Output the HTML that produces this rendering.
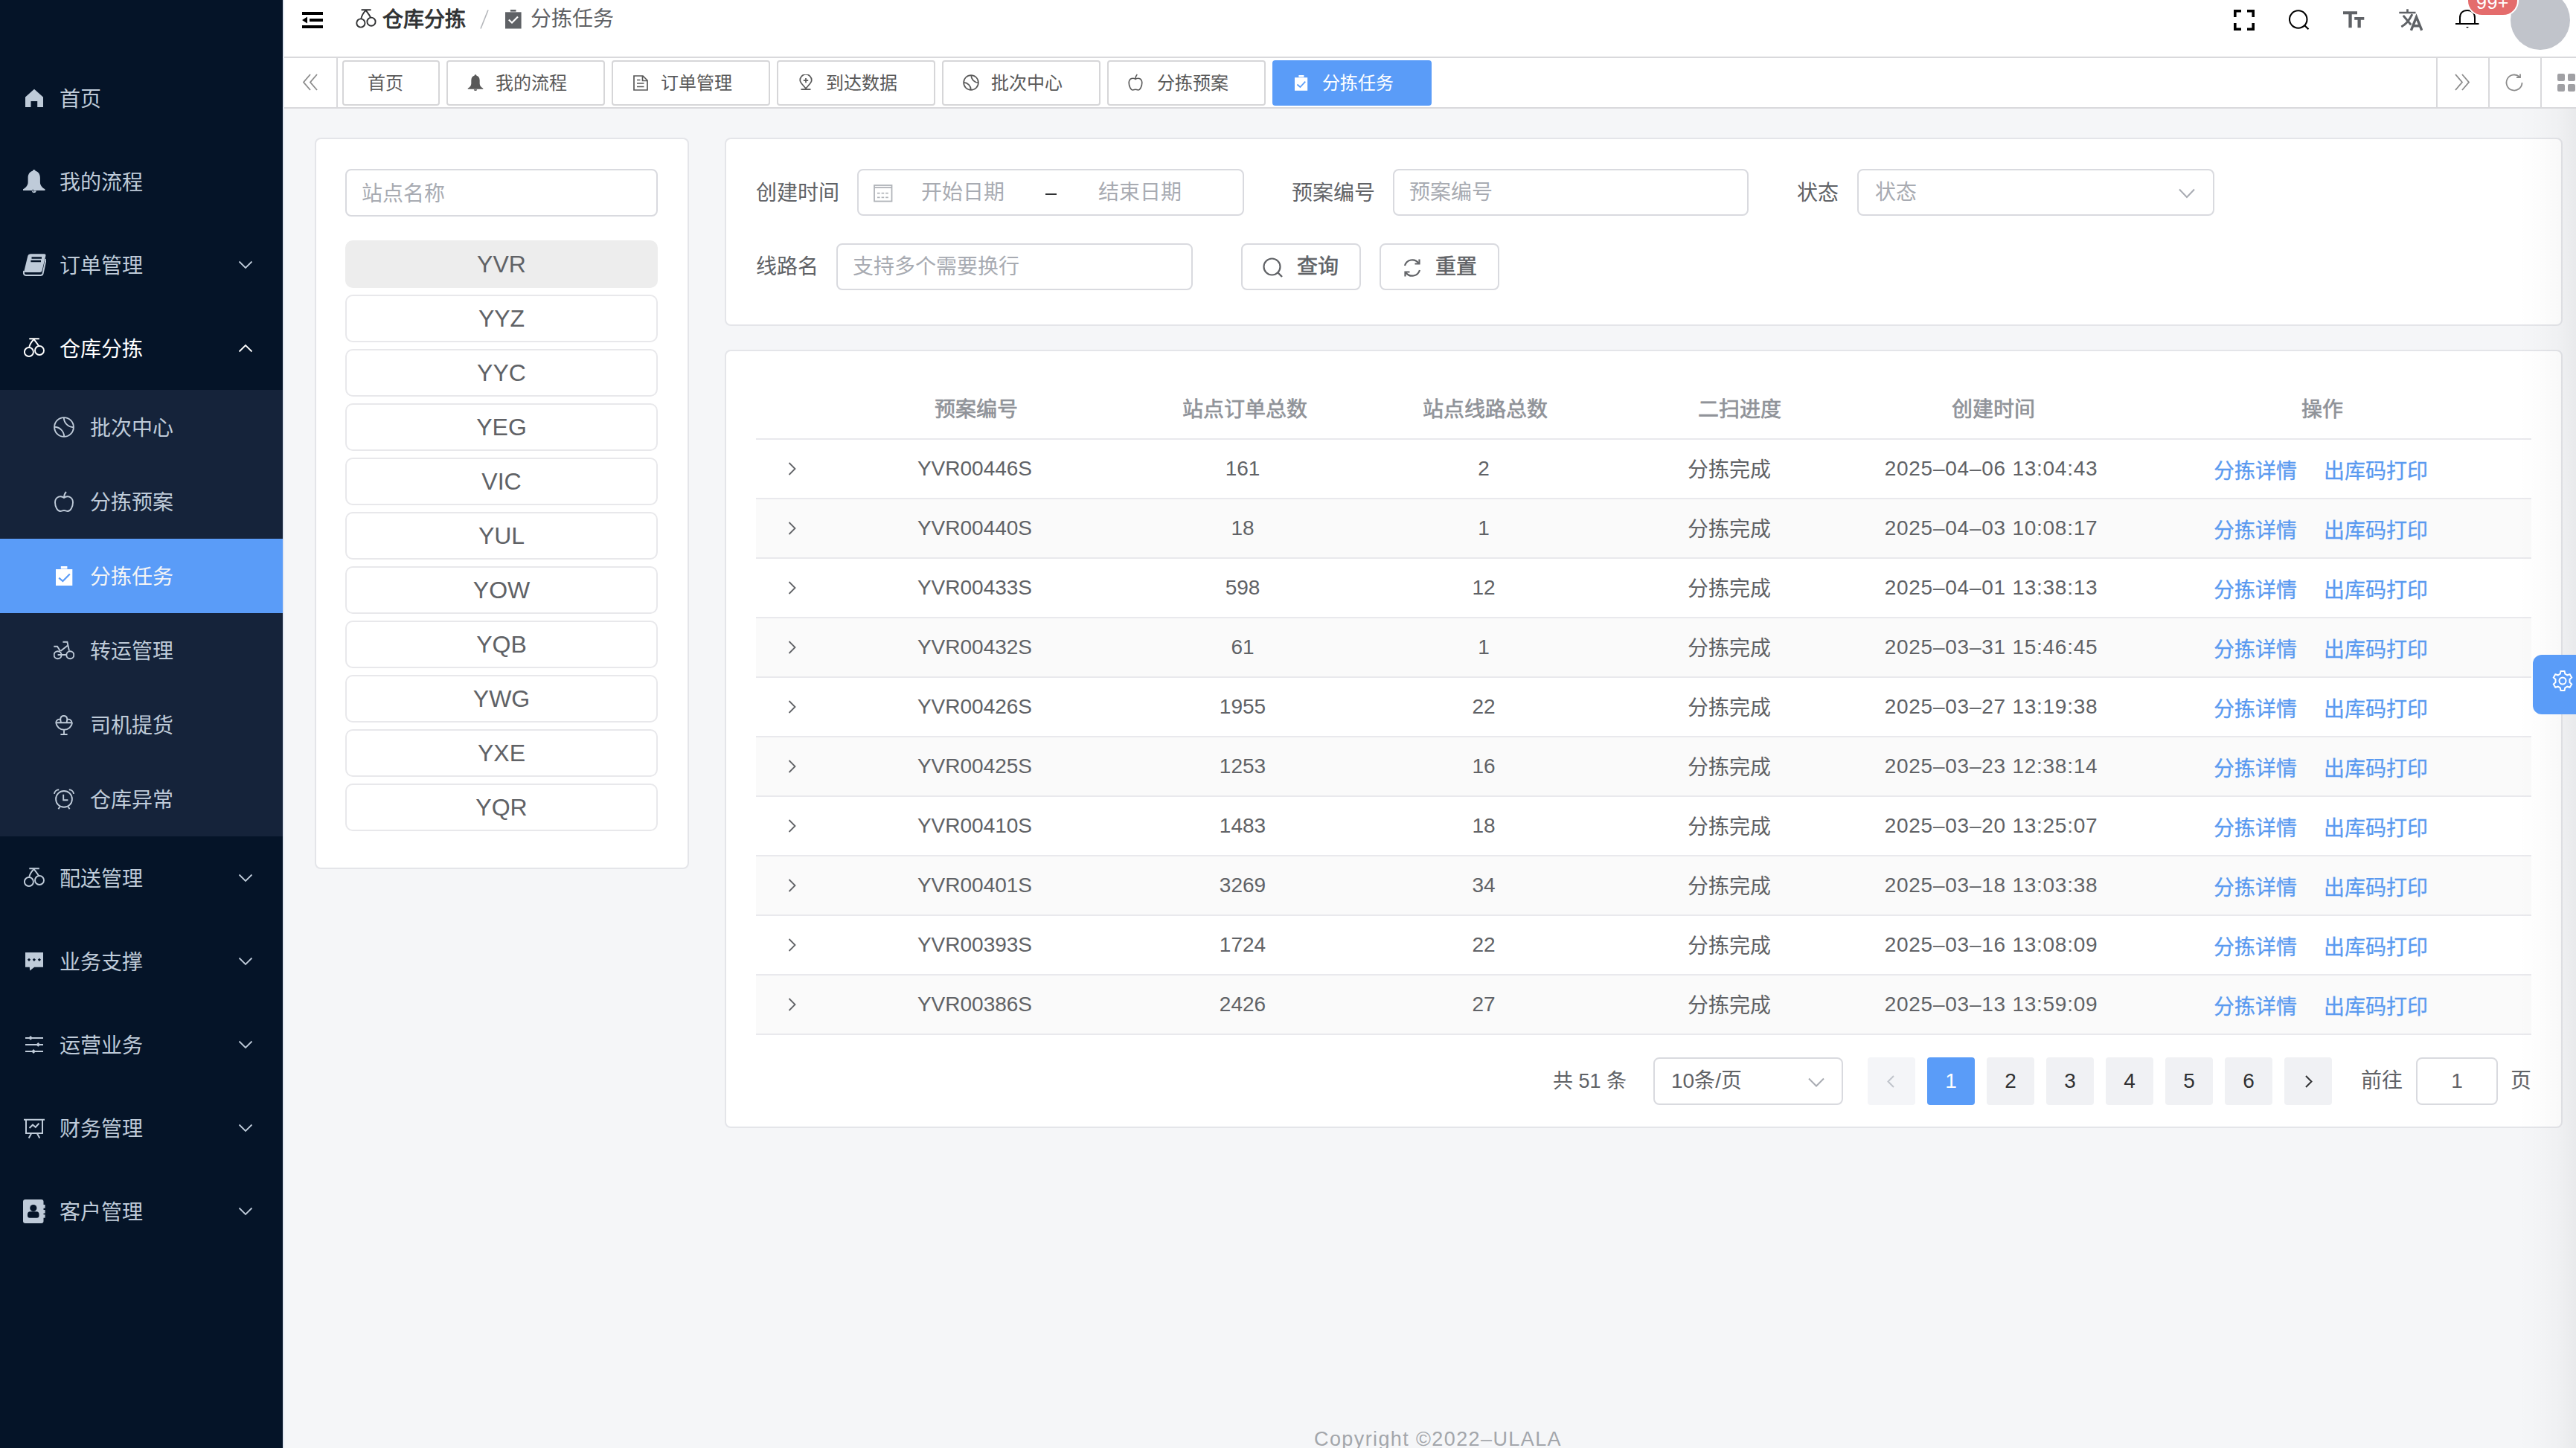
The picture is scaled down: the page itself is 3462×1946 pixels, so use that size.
<!DOCTYPE html>
<html lang="zh-CN">
<head>
<meta charset="utf-8">
<title>分拣任务</title>
<style>
*{box-sizing:border-box;margin:0;padding:0}
html,body{width:3462px;height:1946px;overflow:hidden}
body{font-family:"Liberation Sans",sans-serif;background:#f5f6f8;position:relative;color:#606266}
.abs{position:absolute}
svg{display:block}
/* sidebar */
#side{position:absolute;left:0;top:0;width:380px;height:1946px;background:#051428}
.mi{position:absolute;left:0;width:380px;height:112px}
.mi .ic{position:absolute;left:32px;top:42px;width:28px;height:28px}
.mi .tx{position:absolute;left:80px;top:2px;height:112px;line-height:112px;font-size:28px;color:#bfcbd9;white-space:nowrap}
.mi .ar{position:absolute;left:320px;top:50px;width:20px;height:12px}
#sub{position:absolute;left:0;top:524px;width:380px;height:600px;background:#15233a}
.si{position:absolute;left:0;width:380px;height:100px}
.si .ic{position:absolute;left:72px;top:36px;width:28px;height:28px}
.si .tx{position:absolute;left:121px;top:2px;height:100px;line-height:100px;font-size:28px;color:#bfcbd9;white-space:nowrap}
.si.act{background:#5a9cf8}
.si.act .tx{color:#f4f4f5}
/* navbar */
#nav{position:absolute;left:380px;top:0;width:3082px;height:76px;background:#fff}
#lstrip{position:absolute;left:380px;top:0;width:2px;height:1946px;background:#e2e8f2;z-index:5}
#tags{position:absolute;left:380px;top:76px;width:3082px;height:70px;background:#fff;border-top:2px solid #d9d9dc;border-bottom:2px solid #d9d9dc}
.tag{position:absolute;top:3px;height:61px;border:2px solid #d6d6d8;border-radius:4px;background:#fff;color:#595959;font-size:24px;white-space:nowrap}
.tag .tx{position:absolute;top:0;line-height:57px}
.tag .ic{position:absolute;top:18px;width:22px;height:22px}
.tag.act{background:#5a9cf8;border-color:#5a9cf8;color:#fff}
.tdiv{position:absolute;top:0;width:2px;height:66px;background:#d9d9dc}
/* cards */
.card{position:absolute;background:#fff;border:2px solid #e4e5e9;border-radius:8px}
.inp{position:absolute;height:63px;border:2px solid #d9dadf;border-radius:8px;background:#fff;font-size:28px;color:#a8abb2;white-space:nowrap}
.inp .ph{position:absolute;top:0;line-height:59px}
.lbl{position:absolute;font-size:28px;color:#606266;line-height:40px;white-space:nowrap}
.st{position:absolute;left:39px;width:420px;height:64px;border:2px solid #e8e8eb;border-radius:10px;text-align:center;line-height:60px;font-size:32px;color:#606266}
.st.sel{background:#ededed;border-color:#ededed}
.btn{position:absolute;height:63px;border:2px solid #d9dadf;border-radius:8px;background:#fff;font-size:28px;color:#606266;white-space:nowrap}
/* table */
.th{position:absolute;top:521px;line-height:60px;font-size:28px;-webkit-text-stroke:0.7px #909399;color:#909399;white-space:nowrap;text-align:center}
.row{position:absolute;left:1016px;width:2386px;height:80px;border-bottom:2px solid #e9e9ed}
.row.str{background:#fafafa}
.td{position:absolute;top:0;line-height:78px;font-size:28px;color:#606266;white-space:nowrap;text-align:center}
.lk{color:#5a9af0;-webkit-text-stroke:0.3px #5a9af0}
.pg{position:absolute;top:1421px;width:64px;height:64px;border-radius:4px;background:#f0f1f4;font-size:28px;color:#303133;text-align:center;line-height:64px}
.pg.act{background:#5a9cf8;color:#fff}
</style>
</head>
<body>
<!-- SIDEBAR -->
<div id="side">
  <div class="mi" style="top:76px">
    <svg class="ic" viewBox="0 0 28 28" style="top:42px"><path d="M2 12.5 L14 1.7 L26 12.5 V26 H18.2 V18 H9.5 V26 H2 Z" fill="#bfcbd9"/></svg>
    <div class="tx">首页</div>
  </div>
  <div class="mi" style="top:188px">
    <svg class="ic" viewBox="0 0 32 34" style="left:30px;top:38px;width:32px;height:34px"><path d="M15.75 2 C14.6 2 13.9 2.8 13.9 3.8 C9.6 5 7.6 8.5 7.6 13 V19 C7.6 23 5 26 1 28.3 V30 H30.5 V28.3 C26.5 26 23.9 23 23.9 19 V13 C23.9 8.5 21.9 5 17.6 3.8 C17.6 2.8 16.9 2 15.75 2 Z" fill="#bfcbd9"/><path d="M12.6 30.5 A3.2 3.2 0 0 0 18.9 30.5" fill="#bfcbd9"/><path d="M14.2 28.5 Q13.5 31 15.5 31.5" fill="none" stroke="#051428" stroke-width="0.8"/></svg>
    <div class="tx">我的流程</div>
  </div>
  <div class="mi" style="top:300px">
    <svg class="ic" viewBox="0 0 32 32" style="left:30px;top:40px;width:32px;height:32px"><path d="M11 1.3 H29.5 Q32 1.3 31.4 3.8 L26.6 23.5 Q26 26 23.5 26 H4.5 Q2 26 2.6 23.5 L7.4 3.8 Q8 1.3 11 1.3 Z" fill="#bfcbd9"/><path d="M2.2 24 Q1 30 5 30 H24.5 Q27 30 27.6 27.5 L31.8 8" fill="none" stroke="#bfcbd9" stroke-width="2"/><path d="M12.5 6.5 H26 M11.4 11 H25" stroke="#051428" stroke-width="2.4"/></svg>
    <div class="tx">订单管理</div>
    <svg class="ar" viewBox="0 0 20 12"><path d="M1.5 1.5 L10 10 L18.5 1.5" fill="none" stroke="#bfcbd9" stroke-width="1.8"/></svg>
  </div>
  <div class="mi" style="top:412px">
    <svg class="ic" viewBox="0 0 28 28" style="top:42px"><g fill="none" stroke="#fff" stroke-width="1.9"><circle cx="6.9" cy="19" r="6"/><circle cx="21" cy="17" r="6"/><path d="M7.3 13 C8 8 11 4.5 13.6 2 C15.5 4.5 18 7.5 20.2 11 M7.3 1.3 H20.8"/></g></svg>
    <div class="tx" style="color:#fff">仓库分拣</div>
    <svg class="ar" viewBox="0 0 20 12"><path d="M1.5 10.5 L10 2 L18.5 10.5" fill="none" stroke="#fff" stroke-width="1.8"/></svg>
  </div>
  <div id="sub">
    <div class="si" style="top:0">
      <svg class="ic" viewBox="0 0 28 28"><g fill="none" stroke="#bfcbd9" stroke-width="1.9"><circle cx="14" cy="14" r="12.9"/><path d="M13.8 1.2 A13.2 13.2 0 0 0 26.8 14.2"/><path d="M1.2 13.8 A13.2 13.2 0 0 1 14.2 26.8"/></g></svg>
      <div class="tx">批次中心</div>
    </div>
    <div class="si" style="top:100px">
      <svg class="ic" viewBox="0 0 28 28"><g fill="none" stroke="#bfcbd9" stroke-width="1.9"><path d="M14 9 C10.5 6 2.5 6.5 2 15 C2 21.5 5.5 27 9 27 C11 27 12.5 26 14 26 C15.5 26 17 27 19 27 C22.5 27 26 21.5 26 15 C25.5 6.5 17.5 6 14 9 Z"/><path d="M14 9 C14 5.5 15 3 17 1"/></g></svg>
      <div class="tx">分拣预案</div>
    </div>
    <div class="si act" style="top:200px">
      <svg class="ic" viewBox="0 0 23 26" style="top:37px;left:75px;width:23px;height:26px"><rect x="6.8" y="0" width="8.6" height="3.5" fill="#fff"/><rect x="0" y="4" width="22.3" height="22" fill="#fff"/><path d="M4.2 15.7 L9.4 20 L18.8 10.5" fill="none" stroke="#5a9cf8" stroke-width="2.2"/></svg>
      <div class="tx">分拣任务</div>
    </div>
    <div class="si" style="top:300px">
      <svg class="ic" viewBox="0 0 28 28"><g fill="none" stroke="#bfcbd9" stroke-width="1.9"><circle cx="5.6" cy="20.2" r="5"/><circle cx="22.3" cy="20.2" r="5"/><path d="M0.3 8.8 H5 L9 15 M12.4 2.7 H18.4 L21 14.6 M9.4 15 L18.6 7.7 M5.6 20 H17"/></g></svg>
      <div class="tx">转运管理</div>
    </div>
    <div class="si" style="top:400px">
      <svg class="ic" viewBox="0 0 28 28"><g fill="none" stroke="#bfcbd9" stroke-width="1.9"><path d="M3.2 11.2 H25.1 M3.2 11.2 A11 10.5 0 0 0 25.1 11.2 M9.9 11 C9.4 8.5 9.1 7 9.3 5.8 A4.5 4.5 0 0 1 18.2 5.8 C18.4 7 18.1 8.5 17.6 11 M3.2 11.2 C3.5 7.5 7 5.6 9.5 7.3 M24.6 11.2 C24.3 7.5 20.8 5.6 18.2 7.3 M14 21.7 V27 M9.4 27 H18.6"/></g></svg>
      <div class="tx">司机提货</div>
    </div>
    <div class="si" style="top:500px">
      <svg class="ic" viewBox="0 0 28 28"><g fill="none" stroke="#bfcbd9" stroke-width="1.9"><circle cx="14" cy="13.9" r="10.9"/><path d="M13.2 7.7 V15.2 H19.4"/><path d="M0.9 6.9 A6.5 6.5 0 0 1 7.2 1.2 M27.1 6.9 A6.5 6.5 0 0 0 20.8 1.2 M8.4 24.4 L6.4 27.3 M19.6 24.4 L21.6 27.3"/></g></svg>
      <div class="tx">仓库异常</div>
    </div>
  </div>
  <div class="mi" style="top:1124px">
    <svg class="ic" viewBox="0 0 28 28" style="top:42px"><g fill="none" stroke="#bfcbd9" stroke-width="1.9"><circle cx="6.9" cy="19" r="6"/><circle cx="21" cy="17" r="6"/><path d="M7.3 13 C8 8 11 4.5 13.6 2 C15.5 4.5 18 7.5 20.2 11 M7.3 1.3 H20.8"/></g></svg>
    <div class="tx">配送管理</div>
    <svg class="ar" viewBox="0 0 20 12"><path d="M1.5 1.5 L10 10 L18.5 1.5" fill="none" stroke="#bfcbd9" stroke-width="1.8"/></svg>
  </div>
  <div class="mi" style="top:1236px">
    <svg class="ic" viewBox="0 0 28 28"><path d="M2 2 H26 V21.7 H14.2 L8.1 26.6 L7.8 21.7 H2 Z" fill="#bfcbd9"/><g fill="#051428"><rect x="5.5" y="10.3" width="3" height="3" transform="rotate(45 7 11.8)"/><rect x="12.4" y="10.3" width="3" height="3" transform="rotate(45 13.9 11.8)"/><rect x="19.4" y="10.3" width="3" height="3" transform="rotate(45 20.9 11.8)"/></g></svg>
    <div class="tx">业务支撑</div>
    <svg class="ar" viewBox="0 0 20 12"><path d="M1.5 1.5 L10 10 L18.5 1.5" fill="none" stroke="#bfcbd9" stroke-width="1.8"/></svg>
  </div>
  <div class="mi" style="top:1348px">
    <svg class="ic" viewBox="0 0 28 28"><g stroke="#bfcbd9" stroke-width="2" fill="#bfcbd9"><path d="M2 4.9 H26 M2 13.9 H26 M2 23 H26" fill="none"/></g><g fill="#bfcbd9"><rect x="7" y="2.8" width="4.2" height="4.2" transform="rotate(45 9.1 4.9)"/><rect x="17.2" y="11.8" width="4.2" height="4.2" transform="rotate(45 19.3 13.9)"/><rect x="11" y="20.9" width="4.2" height="4.2" transform="rotate(45 13.1 23)"/></g></svg>
    <div class="tx">运营业务</div>
    <svg class="ar" viewBox="0 0 20 12"><path d="M1.5 1.5 L10 10 L18.5 1.5" fill="none" stroke="#bfcbd9" stroke-width="1.8"/></svg>
  </div>
  <div class="mi" style="top:1460px">
    <svg class="ic" viewBox="0 0 28 28"><g fill="none" stroke="#bfcbd9" stroke-width="2"><path d="M-0.5 2.8 H28.5 M3 2.8 V20.9 H25 V2.8 M10 21.6 L6.7 27.4 M18 21.6 L21.3 27.4 M7.5 13.9 L12 9.7 L15.8 12.8 L20.4 7.8"/></g></svg>
    <div class="tx">财务管理</div>
    <svg class="ar" viewBox="0 0 20 12"><path d="M1.5 1.5 L10 10 L18.5 1.5" fill="none" stroke="#bfcbd9" stroke-width="1.8"/></svg>
  </div>
  <div class="mi" style="top:1572px">
    <svg class="ic" viewBox="0 0 30 32" style="top:40px;left:31px;width:30px;height:32px"><rect x="0" y="0" width="27.5" height="32" rx="3" fill="#bfcbd9"/><rect x="27" y="7" width="2.6" height="4.7" fill="#bfcbd9"/><rect x="27" y="14" width="2.6" height="4.6" fill="#bfcbd9"/><rect x="27" y="20.3" width="2.6" height="4.4" fill="#bfcbd9"/><circle cx="13.8" cy="11.5" r="4.6" fill="#051428"/><path d="M6 20 Q6 16.2 9.5 16.2 H18 Q21.5 16.2 21.5 20 V21.5 Q21.5 24.7 18.5 24.7 H9 Q6 24.7 6 21.5 Z" fill="#051428"/></svg>
    <div class="tx">客户管理</div>
    <svg class="ar" viewBox="0 0 20 12"><path d="M1.5 1.5 L10 10 L18.5 1.5" fill="none" stroke="#bfcbd9" stroke-width="1.8"/></svg>
  </div>
</div>
<div id="lstrip"></div>

<!-- NAVBAR -->
<div id="nav">
  <svg class="abs" style="left:26px;top:16px" width="28" height="22" viewBox="0 0 28 22"><rect x="0" y="0" width="28" height="4" fill="#000"/><rect x="10" y="9" width="18" height="4" fill="#000"/><rect x="0" y="18" width="28" height="4" fill="#000"/><path d="M0 11 L7 6.5 V15.5 Z" fill="#000"/></svg>
  <svg class="abs" style="left:98px;top:12px" width="28" height="26" viewBox="0 0 28 26"><g fill="none" stroke="#303133" stroke-width="1.9"><circle cx="6.9" cy="19" r="5.6"/><circle cx="21" cy="17.2" r="5.6"/><path d="M7.3 13.4 C8 8.5 11 4.5 13.6 1.8 C15.5 4.5 18 7.5 20.2 11.6 M7.6 1.2 H20.6"/></g></svg>
  <div class="abs" style="left:134px;top:7px;font-size:28px;-webkit-text-stroke:0.9px #303133;color:#303133;line-height:40px;white-space:nowrap">仓库分拣</div>
  <svg class="abs" style="left:265px;top:13px" width="12" height="26" viewBox="0 0 12 26"><path d="M11 0.5 L1 25.5" stroke="#b4b6ba" stroke-width="1.6"/></svg>
  <svg class="abs" style="left:299px;top:13px" width="22" height="26" viewBox="0 0 22 26"><rect x="6.9" y="0" width="7.6" height="2.6" fill="#5f6266"/><rect x="0" y="3.3" width="21.6" height="22.2" fill="#5f6266"/><path d="M4.8 13.5 L9 17.5 L17 9.5" fill="none" stroke="#fff" stroke-width="2.2"/></svg>
  <div class="abs" style="left:333px;top:6px;font-size:28px;color:#606266;line-height:40px;white-space:nowrap">分拣任务</div>

  <svg class="abs" style="left:2622px;top:13px" width="28" height="28" viewBox="0 0 28 28"><path d="M1.8 10 V1.8 H10 M18 1.8 H26.2 V10 M26.2 18 V26.2 H18 M10 26.2 H1.8 V18" fill="none" stroke="#000" stroke-width="3.6"/></svg>
  <svg class="abs" style="left:2696px;top:13px" width="28" height="28" viewBox="0 0 28 28"><circle cx="12.75" cy="13" r="11.75" fill="none" stroke="#000" stroke-width="2.1"/><path d="M21 21 L26.5 26.3" stroke="#000" stroke-width="2.2"/></svg>
  <svg class="abs" style="left:2769px;top:15px" width="30" height="23" viewBox="0 0 30 23"><path d="M0 0.3 H19 V4.2 H11.7 V22.3 H7.4 V4.2 H0 Z M15.2 7.9 H28.3 V11.8 H23.8 V22.3 H19.5 V11.8 H15.2 Z" fill="#5f6266"/></svg>
  <svg class="abs" style="left:2844px;top:12px" width="32" height="30" viewBox="0 0 32 30"><g fill="none" stroke="#5f6266"><path d="M0.3 5 H22.5 M11.5 0.3 V5" stroke-width="2.7"/><path d="M17.9 7.1 C14 15 9 21 3.3 24 M5.8 8.9 L16.2 21.2" stroke-width="3"/><path d="M16.4 28.8 L23.5 10.8 L30.8 28.8 M19 22.7 H28" stroke-width="3.4"/></g></svg>
  <svg class="abs" style="left:2920px;top:8px" width="32" height="32" viewBox="0 0 32 32"><g fill="none" stroke="#000" stroke-width="2"><path d="M6 24 V16 C6 10 9.5 6 16 6 C22.5 6 26 10 26 16 V24"/><path d="M0 24 H31.5"/></g><path d="M14 28 H18 L16 29.8 Z" fill="#000"/></svg>
  <div class="abs" style="left:2994px;top:-13px;width:80px;height:80px;border-radius:50%;background:#c1c4cb"></div>
  <div class="abs" style="left:2935px;top:-20px;width:70px;height:42px;border-radius:21px;background:#e46c6c;border:2px solid #fff;color:#fff;font-size:25px;line-height:43px;text-align:center;letter-spacing:0.5px">99+</div>

</div>

<!-- TAGS -->
<div id="tags">
  <svg class="abs" style="left:27px;top:21px" width="20" height="23" viewBox="0 0 20 23"><path d="M10 1 L1 11.5 L10 22 M19 1 L10 11.5 L19 22" fill="none" stroke="#8c8c8c" stroke-width="1.8"/></svg>
  <div class="tdiv" style="left:72px"></div>
  <div class="tag" style="left:80px;width:131px"><div class="tx" style="left:32px">首页</div></div>
  <div class="tag" style="left:220px;width:213px"><svg class="ic" style="left:26px;top:17px;width:22px;height:23px" viewBox="0 1.5 31.5 33"><path d="M15.75 2 C14.6 2 13.9 2.8 13.9 3.8 C9.6 5 7.6 8.5 7.6 13 V19 C7.6 23 5 26 1 28.3 V30 H30.5 V28.3 C26.5 26 23.9 23 23.9 19 V13 C23.9 8.5 21.9 5 17.6 3.8 C17.6 2.8 16.9 2 15.75 2 Z" fill="#595959"/><path d="M12.6 30.5 A3.2 3.2 0 0 0 18.9 30.5" fill="#595959"/></svg><div class="tx" style="left:64px">我的流程</div></div>
  <div class="tag" style="left:442px;width:213px"><svg class="ic" style="left:27px;top:18px;width:20px;height:21px" viewBox="0 0 20 21"><g fill="none" stroke="#595959" stroke-width="1.7"><path d="M1 1 H13 L19 7 V20 H1 Z M12.5 1 V7.5 H19 M5 11 H14.5 M5 15.5 H14.5 M5 6.5 H9.5"/></g></svg><div class="tx" style="left:64px">订单管理</div></div>
  <div class="tag" style="left:664px;width:213px"><svg class="ic" style="left:28px;top:17px;width:18px;height:21px" viewBox="0 0 18 21"><g fill="none" stroke="#595959" stroke-width="1.7"><path d="M9 19 L3.3 12.3 C2 10.8 1.2 9.3 1.2 7.8 A7.8 7.8 0 0 1 16.8 7.8 C16.8 9.3 16 10.8 14.7 12.3 Z M9 5 V11.2 M5.8 8.1 H12.2 M2.5 20.2 H15.5"/></g></svg><div class="tx" style="left:64px">到达数据</div></div>
  <div class="tag" style="left:886px;width:213px"><svg class="ic" style="left:26px;top:17px;width:22px;height:22px" viewBox="0 0 22 22"><g fill="none" stroke="#595959" stroke-width="1.7"><circle cx="11" cy="11" r="9.9"/><path d="M11.1 1.1 A10 10 0 0 0 20.9 11.1 M1.1 10.9 A10 10 0 0 1 10.9 20.9"/></g></svg><div class="tx" style="left:64px">批次中心</div></div>
  <div class="tag" style="left:1108px;width:213px"><svg class="ic" style="left:26px;top:16px;width:20px;height:23px" viewBox="0 0 20 23"><g fill="none" stroke="#595959" stroke-width="1.6"><path d="M10 7.5 C7.5 5.3 1.6 5.6 1.2 12 C1.2 17 3.8 22 6.4 22 C7.9 22 8.9 21.2 10 21.2 C11.1 21.2 12.1 22 13.6 22 C16.2 22 18.8 17 18.8 12 C18.4 5.6 12.5 5.3 10 7.5 Z M10 7.5 C10 4.8 10.8 2.5 12.3 1"/></g></svg><div class="tx" style="left:65px">分拣预案</div></div>
  <div class="tag act" style="left:1330px;width:214px"><svg class="ic" style="left:28px;top:18px;width:18px;height:21px" viewBox="0 0 18 21"><rect x="5.4" y="0" width="7" height="2.6" fill="#fff"/><rect x="0" y="3.2" width="17.2" height="17.6" fill="#fff"/><path d="M3.4 12.5 L7.4 16 L14.3 8.7" fill="none" stroke="#5a9cf8" stroke-width="1.7"/></svg><div class="tx" style="left:65px">分拣任务</div></div>
  <div class="tdiv" style="left:2894px"></div>
  <svg class="abs" style="left:2919px;top:21px" width="20" height="23" viewBox="0 0 20 23"><path d="M1 1 L10 11.5 L1 22 M10 1 L19 11.5 L10 22" fill="none" stroke="#8c8c8c" stroke-width="1.8"/></svg>
  <div class="tdiv" style="left:2964px"></div>
  <svg class="abs" style="left:2987px;top:21px" width="24" height="24" viewBox="0 0 24 24"><path d="M22.5 12 A10.5 10.5 0 1 1 19 4.2" fill="none" stroke="#8c8c8c" stroke-width="1.8"/><path d="M20 0.5 V5 H15" fill="none" stroke="#8c8c8c" stroke-width="1.8"/></svg>
  <div class="tdiv" style="left:3034px"></div>
  <div class="abs" style="left:3057px;top:21px;width:10px;height:10px;border-radius:2px;background:#a0a0a4"></div>
  <div class="abs" style="left:3071px;top:21px;width:10px;height:10px;border-radius:2px;background:#a0a0a4"></div>
  <div class="abs" style="left:3057px;top:35px;width:10px;height:10px;border-radius:2px;background:#a0a0a4"></div>
  <div class="abs" style="left:3071px;top:35px;width:10px;height:10px;border-radius:2px;background:#a0a0a4"></div>

</div>

<!-- LEFT CARD -->
<div class="card" style="left:423px;top:185px;width:503px;height:983px">
  <div class="inp" style="left:39px;top:40px;width:420px;height:64px"><div class="ph" style="left:20px;top:2px;line-height:60px">站点名称</div></div>
  <div class="st sel" style="top:136px">YVR</div>
  <div class="st" style="top:209px">YYZ</div>
  <div class="st" style="top:282px">YYC</div>
  <div class="st" style="top:355px">YEG</div>
  <div class="st" style="top:428px">VIC</div>
  <div class="st" style="top:501px">YUL</div>
  <div class="st" style="top:574px">YOW</div>
  <div class="st" style="top:647px">YQB</div>
  <div class="st" style="top:720px">YWG</div>
  <div class="st" style="top:793px">YXE</div>
  <div class="st" style="top:866px">YQR</div>
</div>

<!-- SEARCH CARD -->
<div class="card" style="left:974px;top:185px;width:2470px;height:253px"></div>
<div class="lbl" style="left:1016px;top:240px">创建时间</div>
<div class="inp" style="left:1152px;top:227px;width:520px">
  <svg class="abs" style="left:20px;top:18px" width="26" height="25" viewBox="0 0 26 25"><g fill="none" stroke="#b0b3b8" stroke-width="1.8"><rect x="1" y="2" width="23.5" height="21.5"/><path d="M1 5 H24.5"/></g><g fill="#b0b3b8"><rect x="5" y="11.8" width="3.6" height="1.7"/><rect x="10.6" y="11.8" width="3.6" height="1.7"/><rect x="16.2" y="11.8" width="3.6" height="1.7"/><rect x="5" y="17.5" width="3.6" height="1.7"/><rect x="10.6" y="17.5" width="3.6" height="1.7"/><rect x="16.2" y="17.5" width="3.6" height="1.7"/></g></svg>
  <div class="ph" style="left:84px">开始日期</div>
  <div class="abs" style="left:251px;top:31px;width:15px;height:2px;background:#303133"></div>
  <div class="ph" style="left:322px">结束日期</div>
</div>
<div class="lbl" style="left:1736px;top:240px">预案编号</div>
<div class="inp" style="left:1872px;top:227px;width:478px"><div class="ph" style="left:20px">预案编号</div></div>
<div class="lbl" style="left:2415px;top:240px">状态</div>
<div class="inp" style="left:2496px;top:227px;width:480px"><div class="ph" style="left:22px">状态</div>
  <svg class="abs" style="left:430px;top:24px" width="22" height="14" viewBox="0 0 22 14"><path d="M1 1.5 L11 12 L21 1.5" fill="none" stroke="#a8abb2" stroke-width="2"/></svg></div>
<div class="lbl" style="left:1016px;top:339px">线路名</div>
<div class="inp" style="left:1124px;top:327px;width:479px"><div class="ph" style="left:20px">支持多个需要换行</div></div>
<div class="btn" style="left:1668px;top:327px;width:161px">
  <svg class="abs" style="left:27px;top:17px" width="28" height="28" viewBox="0 0 28 28"><circle cx="12.5" cy="12.5" r="11" fill="none" stroke="#606266" stroke-width="2.2"/><path d="M20.5 20.5 L26 26" stroke="#606266" stroke-width="2.4"/></svg>
  <div class="abs" style="left:73px;top:0;line-height:59px;-webkit-text-stroke:0.6px #606266">查询</div>
</div>
<div class="btn" style="left:1854px;top:327px;width:161px">
  <svg class="abs" style="left:29px;top:18px" width="26" height="26" viewBox="0 0 26 26"><g fill="none" stroke="#606266" stroke-width="2.2"><path d="M3 10 A10.5 10.5 0 0 1 21.5 6.5 M23 16 A10.5 10.5 0 0 1 4.5 19.5"/><path d="M22.5 1.5 V7.5 H16.5 M3.5 24.5 V18.5 H9.5"/></g></svg>
  <div class="abs" style="left:73px;top:0;line-height:59px;-webkit-text-stroke:0.6px #606266">重置</div>
</div>

<!-- TABLE CARD -->
<div class="card" style="left:974px;top:470px;width:2470px;height:1046px"></div>

<div class="th" style="left:1212px;width:200px">预案编号</div>
<div class="th" style="left:1573px;width:200px">站点订单总数</div>
<div class="th" style="left:1896px;width:200px">站点线路总数</div>
<div class="th" style="left:2238px;width:200px">二扫进度</div>
<div class="th" style="left:2579px;width:200px">创建时间</div>
<div class="th" style="left:3021px;width:200px">操作</div>
<div class="abs" style="left:1016px;top:589px;width:2386px;height:2px;background:#e9e9ed"></div>
<div class="row" style="top:591px">
  <svg class="abs" style="left:43px;top:30px" width="11" height="18" viewBox="0 0 11 18"><path d="M1.5 1 L9.5 9 L1.5 17" fill="none" stroke="#606266" stroke-width="1.8"/></svg>
  <div class="td" style="left:194px;width:200px">YVR00446S</div>
  <div class="td" style="left:554px;width:200px">161</div>
  <div class="td" style="left:878px;width:200px">2</div>
  <div class="td" style="left:1208px;width:200px;top:2px">分拣完成</div>
  <div class="td" style="left:1460px;width:400px;letter-spacing:0.75px">2025–04–06 13:04:43</div>
  <div class="td lk" style="left:1959px;top:4px">分拣详情</div>
  <div class="td lk" style="left:2107px;top:4px">出库码打印</div>
</div>
<div class="row str" style="top:671px">
  <svg class="abs" style="left:43px;top:30px" width="11" height="18" viewBox="0 0 11 18"><path d="M1.5 1 L9.5 9 L1.5 17" fill="none" stroke="#606266" stroke-width="1.8"/></svg>
  <div class="td" style="left:194px;width:200px">YVR00440S</div>
  <div class="td" style="left:554px;width:200px">18</div>
  <div class="td" style="left:878px;width:200px">1</div>
  <div class="td" style="left:1208px;width:200px;top:2px">分拣完成</div>
  <div class="td" style="left:1460px;width:400px;letter-spacing:0.75px">2025–04–03 10:08:17</div>
  <div class="td lk" style="left:1959px;top:4px">分拣详情</div>
  <div class="td lk" style="left:2107px;top:4px">出库码打印</div>
</div>
<div class="row" style="top:751px">
  <svg class="abs" style="left:43px;top:30px" width="11" height="18" viewBox="0 0 11 18"><path d="M1.5 1 L9.5 9 L1.5 17" fill="none" stroke="#606266" stroke-width="1.8"/></svg>
  <div class="td" style="left:194px;width:200px">YVR00433S</div>
  <div class="td" style="left:554px;width:200px">598</div>
  <div class="td" style="left:878px;width:200px">12</div>
  <div class="td" style="left:1208px;width:200px;top:2px">分拣完成</div>
  <div class="td" style="left:1460px;width:400px;letter-spacing:0.75px">2025–04–01 13:38:13</div>
  <div class="td lk" style="left:1959px;top:4px">分拣详情</div>
  <div class="td lk" style="left:2107px;top:4px">出库码打印</div>
</div>
<div class="row str" style="top:831px">
  <svg class="abs" style="left:43px;top:30px" width="11" height="18" viewBox="0 0 11 18"><path d="M1.5 1 L9.5 9 L1.5 17" fill="none" stroke="#606266" stroke-width="1.8"/></svg>
  <div class="td" style="left:194px;width:200px">YVR00432S</div>
  <div class="td" style="left:554px;width:200px">61</div>
  <div class="td" style="left:878px;width:200px">1</div>
  <div class="td" style="left:1208px;width:200px;top:2px">分拣完成</div>
  <div class="td" style="left:1460px;width:400px;letter-spacing:0.75px">2025–03–31 15:46:45</div>
  <div class="td lk" style="left:1959px;top:4px">分拣详情</div>
  <div class="td lk" style="left:2107px;top:4px">出库码打印</div>
</div>
<div class="row" style="top:911px">
  <svg class="abs" style="left:43px;top:30px" width="11" height="18" viewBox="0 0 11 18"><path d="M1.5 1 L9.5 9 L1.5 17" fill="none" stroke="#606266" stroke-width="1.8"/></svg>
  <div class="td" style="left:194px;width:200px">YVR00426S</div>
  <div class="td" style="left:554px;width:200px">1955</div>
  <div class="td" style="left:878px;width:200px">22</div>
  <div class="td" style="left:1208px;width:200px;top:2px">分拣完成</div>
  <div class="td" style="left:1460px;width:400px;letter-spacing:0.75px">2025–03–27 13:19:38</div>
  <div class="td lk" style="left:1959px;top:4px">分拣详情</div>
  <div class="td lk" style="left:2107px;top:4px">出库码打印</div>
</div>
<div class="row str" style="top:991px">
  <svg class="abs" style="left:43px;top:30px" width="11" height="18" viewBox="0 0 11 18"><path d="M1.5 1 L9.5 9 L1.5 17" fill="none" stroke="#606266" stroke-width="1.8"/></svg>
  <div class="td" style="left:194px;width:200px">YVR00425S</div>
  <div class="td" style="left:554px;width:200px">1253</div>
  <div class="td" style="left:878px;width:200px">16</div>
  <div class="td" style="left:1208px;width:200px;top:2px">分拣完成</div>
  <div class="td" style="left:1460px;width:400px;letter-spacing:0.75px">2025–03–23 12:38:14</div>
  <div class="td lk" style="left:1959px;top:4px">分拣详情</div>
  <div class="td lk" style="left:2107px;top:4px">出库码打印</div>
</div>
<div class="row" style="top:1071px">
  <svg class="abs" style="left:43px;top:30px" width="11" height="18" viewBox="0 0 11 18"><path d="M1.5 1 L9.5 9 L1.5 17" fill="none" stroke="#606266" stroke-width="1.8"/></svg>
  <div class="td" style="left:194px;width:200px">YVR00410S</div>
  <div class="td" style="left:554px;width:200px">1483</div>
  <div class="td" style="left:878px;width:200px">18</div>
  <div class="td" style="left:1208px;width:200px;top:2px">分拣完成</div>
  <div class="td" style="left:1460px;width:400px;letter-spacing:0.75px">2025–03–20 13:25:07</div>
  <div class="td lk" style="left:1959px;top:4px">分拣详情</div>
  <div class="td lk" style="left:2107px;top:4px">出库码打印</div>
</div>
<div class="row str" style="top:1151px">
  <svg class="abs" style="left:43px;top:30px" width="11" height="18" viewBox="0 0 11 18"><path d="M1.5 1 L9.5 9 L1.5 17" fill="none" stroke="#606266" stroke-width="1.8"/></svg>
  <div class="td" style="left:194px;width:200px">YVR00401S</div>
  <div class="td" style="left:554px;width:200px">3269</div>
  <div class="td" style="left:878px;width:200px">34</div>
  <div class="td" style="left:1208px;width:200px;top:2px">分拣完成</div>
  <div class="td" style="left:1460px;width:400px;letter-spacing:0.75px">2025–03–18 13:03:38</div>
  <div class="td lk" style="left:1959px;top:4px">分拣详情</div>
  <div class="td lk" style="left:2107px;top:4px">出库码打印</div>
</div>
<div class="row" style="top:1231px">
  <svg class="abs" style="left:43px;top:30px" width="11" height="18" viewBox="0 0 11 18"><path d="M1.5 1 L9.5 9 L1.5 17" fill="none" stroke="#606266" stroke-width="1.8"/></svg>
  <div class="td" style="left:194px;width:200px">YVR00393S</div>
  <div class="td" style="left:554px;width:200px">1724</div>
  <div class="td" style="left:878px;width:200px">22</div>
  <div class="td" style="left:1208px;width:200px;top:2px">分拣完成</div>
  <div class="td" style="left:1460px;width:400px;letter-spacing:0.75px">2025–03–16 13:08:09</div>
  <div class="td lk" style="left:1959px;top:4px">分拣详情</div>
  <div class="td lk" style="left:2107px;top:4px">出库码打印</div>
</div>
<div class="row str" style="top:1311px">
  <svg class="abs" style="left:43px;top:30px" width="11" height="18" viewBox="0 0 11 18"><path d="M1.5 1 L9.5 9 L1.5 17" fill="none" stroke="#606266" stroke-width="1.8"/></svg>
  <div class="td" style="left:194px;width:200px">YVR00386S</div>
  <div class="td" style="left:554px;width:200px">2426</div>
  <div class="td" style="left:878px;width:200px">27</div>
  <div class="td" style="left:1208px;width:200px;top:2px">分拣完成</div>
  <div class="td" style="left:1460px;width:400px;letter-spacing:0.75px">2025–03–13 13:59:09</div>
  <div class="td lk" style="left:1959px;top:4px">分拣详情</div>
  <div class="td lk" style="left:2107px;top:4px">出库码打印</div>
</div>

<!-- PAGINATION -->
<div class="abs" style="left:2087px;top:1433px;font-size:27px;line-height:40px;color:#606266;white-space:nowrap">共 51 条</div>
<div class="inp" style="left:2222px;top:1421px;width:255px;height:64px;color:#606266"><div class="ph" style="left:22px;line-height:60px">10条/页</div>
  <svg class="abs" style="left:206px;top:25px" width="22" height="13" viewBox="0 0 22 13"><path d="M1 1.5 L11 11.5 L21 1.5" fill="none" stroke="#a8abb2" stroke-width="2"/></svg></div>
<div class="pg" style="left:2510px;background:#f4f5f8"><svg class="abs" style="left:26px;top:24px" width="10" height="17" viewBox="0 0 10 17"><path d="M9 1 L1.5 8.5 L9 16" fill="none" stroke="#c0c4cc" stroke-width="2"/></svg></div>
<div class="pg act" style="left:2590px">1</div>
<div class="pg" style="left:2670px">2</div>
<div class="pg" style="left:2750px">3</div>
<div class="pg" style="left:2830px">4</div>
<div class="pg" style="left:2910px">5</div>
<div class="pg" style="left:2990px">6</div>
<div class="pg" style="left:3070px"><svg class="abs" style="left:28px;top:24px" width="10" height="17" viewBox="0 0 10 17"><path d="M1 1 L8.5 8.5 L1 16" fill="none" stroke="#303133" stroke-width="2"/></svg></div>
<div class="abs" style="left:3173px;top:1433px;font-size:28px;line-height:40px;color:#606266">前往</div>
<div class="inp" style="left:3247px;top:1421px;width:110px;height:64px;color:#606266;text-align:center"><div style="line-height:60px">1</div></div>
<div class="abs" style="left:3374px;top:1433px;font-size:28px;line-height:40px;color:#606266">页</div>

<div class="abs" style="left:3382px;top:146px;width:80px;height:1800px;background:linear-gradient(90deg,rgba(0,0,0,0) 0%,rgba(0,0,0,.008) 35%,rgba(0,0,0,.025) 70%,rgba(0,0,0,.05) 100%)"></div>
<!-- SETTINGS BTN -->
<div class="abs" style="left:3404px;top:880px;width:70px;height:80px;border-radius:12px 0 0 12px;background:#5a9cf8">
  <svg class="abs" style="left:25px;top:20px" width="30" height="30" viewBox="0 0 30 30"><g fill="none" stroke="#fff" stroke-width="2"><path d="M12.5 2 H17.5 L18.3 5.6 L21.2 7.3 L24.7 6.2 L27.2 10.5 L24.5 13 V17 L27.2 19.5 L24.7 23.8 L21.2 22.7 L18.3 24.4 L17.5 28 H12.5 L11.7 24.4 L8.8 22.7 L5.3 23.8 L2.8 19.5 L5.5 17 V13 L2.8 10.5 L5.3 6.2 L8.8 7.3 L11.7 5.6 Z"/><circle cx="15" cy="15" r="4.5"/></g></svg>
</div>

<!-- FOOTER -->
<div class="abs" style="left:1766px;top:1914px;font-size:27px;line-height:40px;color:#a3a6ab;white-space:nowrap;letter-spacing:1.4px">Copyright ©2022–ULALA</div>


</body>
</html>
